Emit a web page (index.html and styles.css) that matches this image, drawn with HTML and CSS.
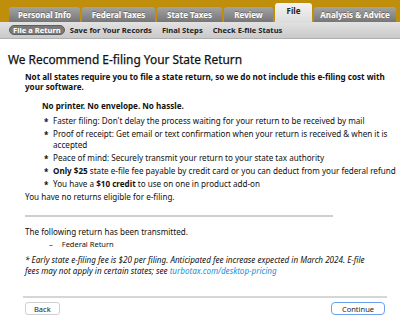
FILE: index.html
```html
<!DOCTYPE html>
<html lang="en">
<head>
  <meta charset="UTF-8">
  <title>File - State Return</title>
  <link rel="stylesheet" href="styles.css">
</head>
<body>
  <header class="topbar">
    <a class="tab">Personal Info</a>
    <a class="tab">Federal Taxes</a>
    <a class="tab">State Taxes</a>
    <a class="tab">Review</a>
    <a class="tab active">File</a>
    <a class="tab">Analysis &amp; Advice</a>
  </header>
  <nav class="subnav">
    <a class="pill">File a Return</a>
    <a>Save for Your Records</a>
    <a>Final Steps</a>
    <a>Check E-file Status</a>
  </nav>
  <main class="content">
    <h1>We Recommend E-filing Your State Return</h1>
    <p class="intro">Not all states require you to file a state return, so we do not include this e-filing cost with your software.</p>
    <div class="benefits">
      <p class="tagline">No printer. No envelope. No hassle.</p>
      <ul>
        <li>Faster filing: Don't delay the process waiting for your return to be received by mail</li>
        <li>Proof of receipt: Get email or text confirmation when your return is received &amp; when it is accepted</li>
        <li>Peace of mind: Securely transmit your return to your state tax authority</li>
        <li><b>Only $25</b> state e-file fee payable by credit card or you can deduct from your federal refund</li>
        <li>You have a <b>$10 credit</b> to use on one in product add-on</li>
      </ul>
    </div>
    <p class="status">You have no returns eligible for e-filing.</p>
    <hr class="sep">
    <p class="status transmitted">The following return has been transmitted.</p>
    <div class="returns"><span class="dash">&ndash;</span>Federal Return</div>
    <p class="note">* Early state e-filing fee is $20 per filing. Anticipated fee increase expected in March 2024. E-file fees may not apply in certain states; see <a href="#">turbotax.com/desktop-pricing</a></p>
  </main>
  <footer class="actions">
    <button class="btn">Back</button>
    <button class="btn primary">Continue</button>
  </footer>
</body>
</html>
```
FILE: styles.css
```css
* { margin: 0; padding: 0; box-sizing: border-box; }
body {
  font-family: "Noto Sans", sans-serif;
  color: #111;
  background: #fff;
  width: 400px;
  height: 323px;
  overflow: hidden;
  display: flex;
  flex-direction: column;
}
/* Pestañas principales */
.topbar {
  background: #bf8e0a;
  height: 22px;
  flex: none;
  display: flex;
  align-items: flex-end;
  gap: 2px;
  padding-left: 9px;
  position: relative;
  z-index: 2;
}
.tab {
  height: 15px;
  width: 71px;
  flex: none;
  background: linear-gradient(#a3a3a3, #767676);
  border-radius: 3px 3px 0 0;
  color: #fff;
  font-size: 8px;
  font-weight: bold;
  text-align: center;
  line-height: 15px;
  text-shadow: 0 -1px 0 rgba(0,0,0,0.3);
}
.tab:nth-child(2) { width: 73px; }
.tab:nth-child(3) { width: 65px; }
.tab:nth-child(4) { width: 49px; }
.tab:nth-child(6) { width: 82px; }
.tab.active {
  width: 37px;
  height: 20px;
  margin-bottom: -1px;
  background: linear-gradient(#f4f4f4, #dcdcdc);
  color: #222;
  text-shadow: none;
  line-height: 16px;
}
.subnav {
  height: 17px;
  flex: none;
  background: linear-gradient(#e2e2e2, #c9c9c9);
  border-bottom: 1px solid #b0b0b0;
  display: flex;
  align-items: center;
  gap: 10px;
  padding-left: 9px;
  font-size: 7.6px;
  font-weight: bold;
  color: #222;
}
.pill {
  background: #7a7a7a;
  color: #fff;
  border: 1px solid #5f5f5f;
  border-radius: 5px;
  padding: 0 3px;
  line-height: 8px;
  height: 10px;
  margin-right: -5px;
}
.content {
  flex: 1;
  padding: 13px 0 0 25px;
  font-size: 8.1px;
  line-height: 11px;
}
h1 {
  font-size: 11.9px;
  font-weight: normal;
  -webkit-text-stroke: 0.25px #111;
  margin: 0 0 5px -17px;
  line-height: 15px;
}
.intro {
  font-weight: bold;
  line-height: 10px;
  padding-right: 6px;
}
.benefits { padding-left: 17px; margin-top: 8px; }
.tagline { font-weight: bold; margin-bottom: 4px; }
ul { list-style: none; }
li {
  position: relative;
  padding-left: 11px;
  margin-bottom: 2px;
}
li::before {
  content: "*";
  position: absolute;
  left: 2px;
  top: 1px;
  font-weight: bold;
}
.sep {
  border: none;
  border-top: 2px solid #cfcfcf;
  width: 308px;
  margin: 13px 0 9px;
}
.returns {
  font-size: 7.5px;
  margin: 2px 0 0 24px;
}
.dash { margin-right: 9px; }
.note {
  font-style: italic;
  margin-top: 5px;
  line-height: 10.5px;
  padding-right: 24px;
}
.note a { color: #1a8fd8; text-decoration: none; }
.actions {
  flex: none;
  margin: 0 13px 8px 23px;
  border-top: 2px solid #d6d6d6;
  display: flex;
  justify-content: space-between;
  padding: 4px 2px 0;
}
.btn {
  font-family: "Noto Sans", sans-serif;
  font-size: 7.5px;
  background: #fff;
  border: 1px solid #cfcfcf;
  border-radius: 3px;
  height: 13px;
  padding: 0 8px;
  color: #222;
}
.btn.primary {
  border: 1.5px solid #6a9ff0;
  border-radius: 4px;
  padding: 0 10px;
}
```
